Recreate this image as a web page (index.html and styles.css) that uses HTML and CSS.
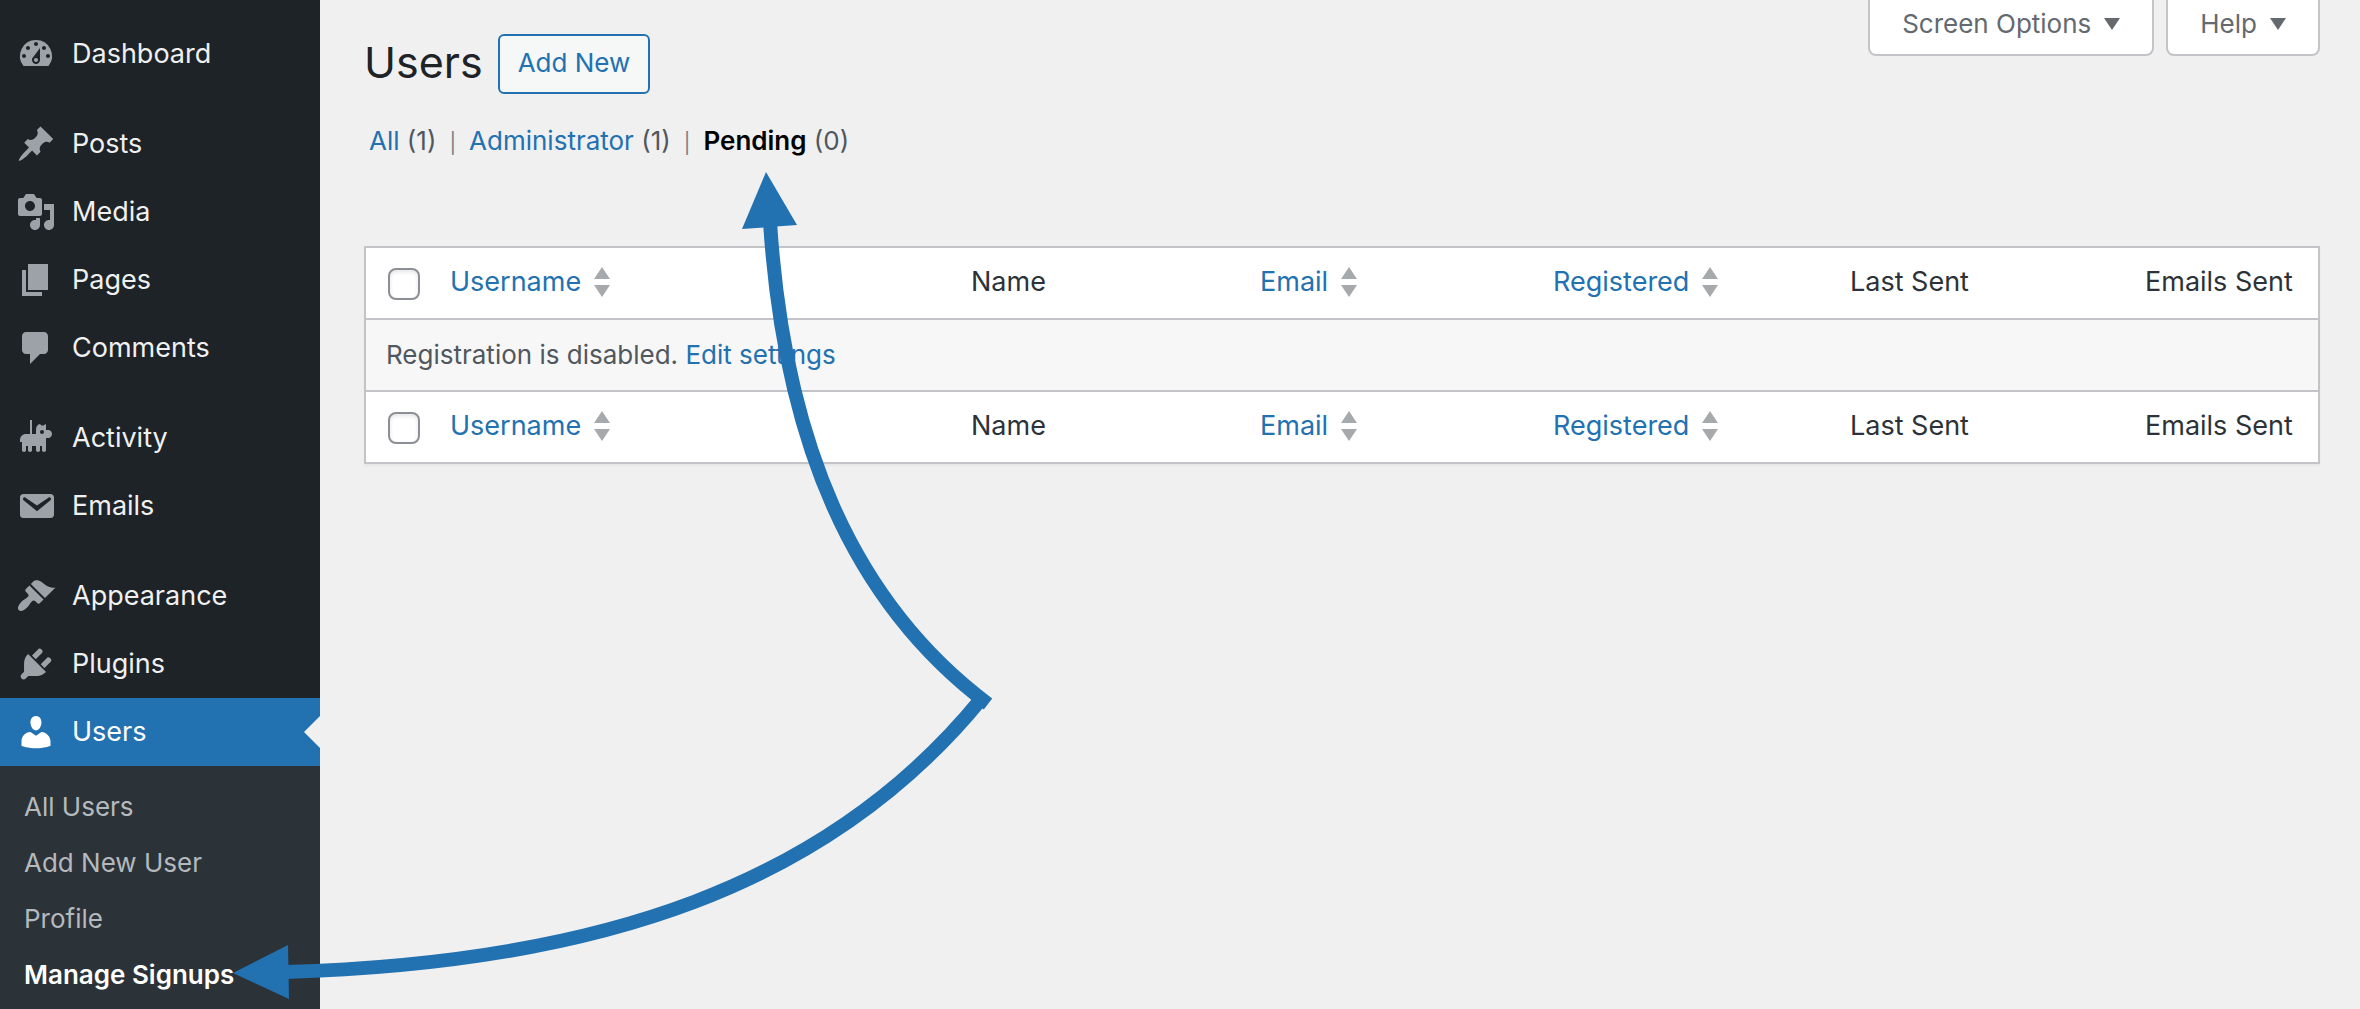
FILE: index.html
```
<!DOCTYPE html>
<html lang="en">
<head>
<meta charset="utf-8">
<title>Users</title>
<link rel="stylesheet" href="styles.css">
</head>
<body>
<div class="layout">
  <nav class="sidebar" aria-label="Main menu">
    <ul class="menu">
      <li><a class="menu-link" href="#"><svg class="icon" viewBox="0 0 20 20"><path d="M3.76 16h12.48A7.998 7.998 0 0 0 10 3a7.998 7.998 0 0 0-6.24 13zM10 4c.55 0 1 .45 1 1s-.45 1-1 1-1-.45-1-1 .45-1 1-1zM6 6c.55 0 1 .45 1 1s-.45 1-1 1-1-.45-1-1 .45-1 1-1zm8 0c.55 0 1 .45 1 1s-.45 1-1 1-1-.45-1-1 .45-1 1-1zm-5.37 5.55L12 7v6c0 1.1-.9 2-2 2s-2-.9-2-2c0-.57.24-1.08.63-1.45zM4 10c.55 0 1 .45 1 1s-.45 1-1 1-1-.45-1-1 .45-1 1-1zm12 0c.55 0 1 .45 1 1s-.45 1-1 1-1-.45-1-1 .45-1 1-1zm-5 3c0-.55-.45-1-1-1s-1 .45-1 1 .45 1 1 1 1-.45 1-1z"/></svg>Dashboard</a></li>
      <li class="group-start"><a class="menu-link" href="#"><svg class="icon" viewBox="0 0 20 20"><path d="M10.44 3.02l1.82-1.82 6.36 6.35-1.83 1.82c-1.05-.68-2.48-.57-3.41.36l-.75.75c-.92.93-1.04 2.35-.35 3.41l-1.83 1.82-2.41-2.41-2.8 2.79c-.42.42-3.38 2.71-3.8 2.29s1.86-3.39 2.28-3.81l2.79-2.79L4.1 9.36l1.83-1.82c1.05.69 2.48.57 3.4-.36l.75-.75c.93-.92 1.05-2.35.36-3.41z"/></svg>Posts</a></li>
      <li><a class="menu-link" href="#"><svg class="icon" viewBox="0 0 20 20"><path d="M13 11V4c0-.55-.45-1-1-1h-1.67L9 1H5L3.67 3H2c-.55 0-1 .45-1 1v7c0 .55.45 1 1 1h10c.55 0 1-.45 1-1zM7 4.5c1.38 0 2.5 1.12 2.5 2.5S8.38 9.5 7 9.5 4.5 8.38 4.5 7 5.62 4.5 7 4.5zM14 6h5v10.5c0 1.38-1.12 2.5-2.5 2.5S14 17.88 14 16.5s1.12-2.5 2.5-2.5c.17 0 .34.02.5.05V9h-3V6zm-4 8.05V13h2v3.5c0 1.38-1.12 2.5-2.5 2.5S7 17.88 7 16.5 8.12 14 9.5 14c.17 0 .34.02.5.05z"/></svg>Media</a></li>
      <li><a class="menu-link" href="#"><svg class="icon" viewBox="0 0 20 20"><path d="M6 15V2h10v13H6zm-1 1h8v2H3V5h2v11z"/></svg>Pages</a></li>
      <li><a class="menu-link" href="#"><svg class="icon" viewBox="0 0 20 20"><path d="M5 2h9c1.1 0 2 .9 2 2v7c0 1.1-.9 2-2 2h-2l-5 5v-5H5c-1.1 0-2-.9-2-2V4c0-1.1.9-2 2-2z"/></svg>Comments</a></li>
      <li class="group-start"><a class="menu-link" href="#"><svg class="icon" viewBox="0 0 20 20"><path fill-rule="evenodd" d="M7 1h1v7h2V6c0-1.5.6-2.3 1-2.6L12 3l.7.8h1L15 3v3h1.200c1 0 1.8.9 1.8 2s-.8 2-1.8 2H15v6.300c0 .9-2 .9-2 0V14h-1v2.300c0 .9-2 .9-2 0V14H8v2.300c0 .9-2 .9-2 0V14H5v2.300c0 .9-2 .9-2 0V12H2v-1c0-1.700 1.300-3 3-3h2zM13 6a1 1 0 1 0 0 2 1 1 0 0 0 0-2z"/></svg>Activity</a></li>
      <li><a class="menu-link" href="#"><svg class="icon" viewBox="0 0 20 20"><path d="M3.87 4h13.25C18.37 4 19 4.59 19 5.79v8.42c0 1.19-.63 1.79-1.88 1.79H3.87c-1.25 0-1.88-.6-1.88-1.79V5.79c0-1.2.63-1.79 1.88-1.79zm6.62 8.6l6.74-5.53c.24-.2.43-.66.13-1.07-.29-.41-.82-.42-1.17-.17l-5.7 3.86L4.8 5.83c-.35-.25-.88-.24-1.17.17-.3.41-.11.87.13 1.07z"/></svg>Emails</a></li>
      <li class="group-start"><a class="menu-link" href="#"><svg class="icon" viewBox="0 0 20 20"><path d="M14.48 11.06L7.41 3.99l1.5-1.5c.5-.56 2.3-.47 3.51.32 1.21.8 1.43 1.28 2.91 2.1 1.18.64 2.45 1.26 4.45.85zm-.71.71L6.7 4.7 4.93 6.47c-.39.39-.39 1.02 0 1.41l1.06 1.06c.39.39.39 1.03 0 1.42-.6.6-1.43 1.11-2.21 1.69-.35.26-.7.53-1.01.84C1.43 14.23.4 16.08 1.4 17.07c.99 1 2.84-.03 4.18-1.36.31-.31.58-.66.85-1.02.57-.78 1.08-1.61 1.69-2.21.39-.39 1.02-.39 1.41 0l1.06 1.06c.39.39 1.02.39 1.41 0z"/></svg>Appearance</a></li>
      <li><a class="menu-link" href="#"><svg class="icon" viewBox="0 0 20 20"><path d="M13.11 4.36L9.87 7.6 8 5.73l3.24-3.24c.35-.34 1.05-.2 1.56.32.52.51.66 1.21.31 1.55zm-8 1.77l.91-1.12 9.01 9.01-1.19.84c-.71.71-2.63 1.16-3.82 1.16H6.14L4.9 17.26c-.59.59-1.54.59-2.12 0-.59-.58-.59-1.53 0-2.12l1.24-1.24v-3.88c0-1.13.4-3.19 1.09-3.89zm7.26 3.97l3.24-3.24c.34-.35 1.04-.21 1.55.31.52.51.66 1.21.31 1.55l-3.24 3.25z"/></svg>Plugins</a></li>
      <li>
        <a class="menu-link is-current" href="#"><svg class="icon" viewBox="0 0 20 20"><path d="M10 9.25c-2.27 0-2.73-3.44-2.73-3.44C7 4.02 7.82 2 9.97 2c2.16 0 2.98 2.02 2.71 3.81 0 0-.41 3.44-2.68 3.44zm0 2.57L12.72 10c2.39 0 4.52 2.33 4.52 4.53v2.49s-3.65 1.13-7.24 1.13c-3.65 0-7.24-1.13-7.24-1.13v-2.49c0-2.25 1.94-4.48 4.47-4.48z"/></svg>Users</a>
        <ul class="submenu">
          <li><a class="submenu-link" href="#">All Users</a></li>
          <li><a class="submenu-link" href="#">Add New User</a></li>
          <li><a class="submenu-link" href="#">Profile</a></li>
          <li><a class="submenu-link is-active" href="#">Manage Signups</a></li>
        </ul>
      </li>
    </ul>
  </nav>

  <main class="content">
    <header class="page-head">
      <div class="title-row">
        <h1 class="title">Users</h1>
        <a class="add-new" href="#">Add New</a>
      </div>
      <div class="screen-meta">
        <button class="meta-button" type="button">Screen Options<span class="caret"></span></button>
        <button class="meta-button" type="button">Help<span class="caret"></span></button>
      </div>
    </header>

    <ul class="filters">
      <li><a href="#">All</a> <span>(1)</span></li>
      <li><a href="#">Administrator</a> <span>(1)</span></li>
      <li><a class="is-selected" href="#">Pending</a> <span>(0)</span></li>
    </ul>

    <table class="signups">
      <colgroup><col class="col-check"><col class="col-username"><col class="col-name"><col class="col-email"><col class="col-registered"><col class="col-last"><col class="col-count"></colgroup>
      <thead>
        <tr>
          <td class="check"><input type="checkbox" aria-label="Select all"></td>
          <th scope="col"><a class="sort" href="#">Username<span class="sort-arrows"></span></a></th>
          <th scope="col">Name</th>
          <th scope="col"><a class="sort" href="#">Email<span class="sort-arrows"></span></a></th>
          <th scope="col"><a class="sort" href="#">Registered<span class="sort-arrows"></span></a></th>
          <th scope="col">Last Sent</th>
          <th scope="col">Emails Sent</th>
        </tr>
      </thead>
      <tbody>
        <tr><td class="notice" colspan="7">Registration is disabled. <a href="#">Edit settings</a></td></tr>
      </tbody>
      <tfoot>
        <tr>
          <td class="check"><input type="checkbox" aria-label="Select all"></td>
          <th scope="col"><a class="sort" href="#">Username<span class="sort-arrows"></span></a></th>
          <th scope="col">Name</th>
          <th scope="col"><a class="sort" href="#">Email<span class="sort-arrows"></span></a></th>
          <th scope="col"><a class="sort" href="#">Registered<span class="sort-arrows"></span></a></th>
          <th scope="col">Last Sent</th>
          <th scope="col">Emails Sent</th>
        </tr>
      </tfoot>
    </table>
  </main>

  <svg class="callout" width="1000" height="1009" viewBox="0 0 1000 1009" aria-hidden="true">
    <path class="callout-line" d="M770 222C784 440 852 602 988 704"/>
    <path class="callout-line" d="M982 698C830 885 600 963 285 972"/>
    <path class="callout-head" d="M766 172L797 225L742 229z"/>
    <path class="callout-head" d="M233 973L288 945L289 999z"/>
  </svg>
</div>
</body>
</html>
```

FILE: styles.css
```
* {
  box-sizing: border-box;
}

body {
  margin: 0;
  background: #f0f0f0;
  color: #3c434a;
  font-family: Inter, "Liberation Sans", sans-serif;
  font-size: 26px;
  line-height: 36px;
}

ul {
  list-style: none;
  margin: 0;
  padding: 0;
}

a {
  color: #2271b1;
  text-decoration: none;
}

.layout {
  position: relative;
  display: flex;
  min-height: 100vh;
  overflow: hidden;
}

/* Sidebar */
.sidebar {
  flex: 0 0 320px;
  background: #1d2327;
}

.menu {
  padding-top: 20px;
}

.group-start {
  margin-top: 22px;
}

.menu-link {
  position: relative;
  display: flex;
  align-items: center;
  gap: 16px;
  height: 68px;
  padding-left: 16px;
  color: #f0f0f1;
  font-size: 27px;
}

.icon {
  width: 40px;
  height: 40px;
  fill: #9ca2a7;
}

.menu-link.is-current {
  background: #2271b1;
  color: #fff;
}

.is-current .icon {
  fill: #fff;
}

.is-current::after {
  content: "";
  position: absolute;
  right: 0;
  top: 18px;
  border: 16px solid transparent;
  border-left-width: 0;
  border-right-color: #f0f0f0;
}

.submenu {
  padding: 13px 0 6px;
  background: #2c3338;
}

.submenu-link {
  display: block;
  padding: 10px 24px;
  color: #b4b9be;
}

.submenu-link.is-active {
  color: #fff;
  font-weight: 600;
}

/* Content */
.content {
  flex: 1;
  padding: 0 40px 0 44px;
}

.page-head {
  display: flex;
  justify-content: space-between;
  align-items: flex-start;
}

.title-row {
  display: flex;
  align-items: flex-start;
  gap: 15px;
  padding-top: 34px;
}

.title {
  margin: 0;
  color: #1d2327;
  font-size: 43px;
  font-weight: 400;
  line-height: 56px;
}

.add-new {
  height: 60px;
  padding: 9px 18px;
  border: 2px solid #2271b1;
  border-radius: 6px;
  background: #f6f7f7;
}

.screen-meta {
  display: flex;
  gap: 12px;
}

.meta-button {
  display: flex;
  align-items: center;
  gap: 13px;
  height: 56px;
  padding: 0 32px 6px;
  border: 2px solid #c3c4c7;
  border-top: 0;
  border-radius: 0 0 8px 8px;
  background: #fff;
  color: #646970;
  font: inherit;
}

.caret {
  border: 8px solid transparent;
  border-top: 12px solid #646970;
  border-bottom: 0;
}

.filters {
  display: flex;
  margin: 29px 0 87px 5px;
  color: #50575e;
}

.filters li + li::before {
  content: "|";
  margin: 0 13px;
  color: #787c82;
  font-size: 20px;
  line-height: 20px;
}

.filters .is-selected {
  color: #000;
  font-weight: 600;
}

/* Table */
.signups {
  width: 100%;
  table-layout: fixed;
  border-collapse: collapse;
  border: 2px solid #c3c4c7;
  background: #fff;
  box-shadow: 0 2px 2px rgba(0, 0, 0, 0.04);
}

.signups th,
.signups td {
  height: 72px;
  padding: 0 20px;
  border-top: 2px solid #c3c4c7;
  text-align: left;
}

.signups th {
  padding-bottom: 2px;
  color: #2c3338;
  font-size: 27px;
  font-weight: 400;
  white-space: nowrap;
}

.col-check { width: 65px; }
.col-name { width: 289px; }
.col-email { width: 293px; }
.col-registered { width: 297px; }
.col-last { width: 295px; }
.col-count { width: 194px; }

.signups .check {
  padding: 0 0 0 22px;
}

.check input {
  appearance: none;
  display: block;
  width: 32px;
  height: 32px;
  margin: 2px 0 0;
  border: 2px solid #8c8f94;
  border-radius: 8px;
  background: #fff;
  box-shadow: inset 0 2px 4px rgba(0, 0, 0, 0.1);
}

.signups .notice {
  background: #f7f7f7;
  color: #50575e;
}

.sort {
  display: inline-flex;
  align-items: center;
  gap: 13px;
}

.sort-arrows {
  display: grid;
  gap: 6px;
}

.sort-arrows::before,
.sort-arrows::after {
  content: "";
  border: 8px solid transparent;
}

.sort-arrows::before {
  border-top: 0;
  border-bottom: 12px solid #a7aaad;
}

.sort-arrows::after {
  border-bottom: 0;
  border-top: 12px solid #a7aaad;
}

/* Arrows drawn over the page */
.callout {
  position: absolute;
  left: 0;
  top: 0;
  pointer-events: none;
}

.callout-line {
  fill: none;
  stroke: #2271b1;
  stroke-width: 14px;
}

.callout-head {
  fill: #2271b1;
}
```
